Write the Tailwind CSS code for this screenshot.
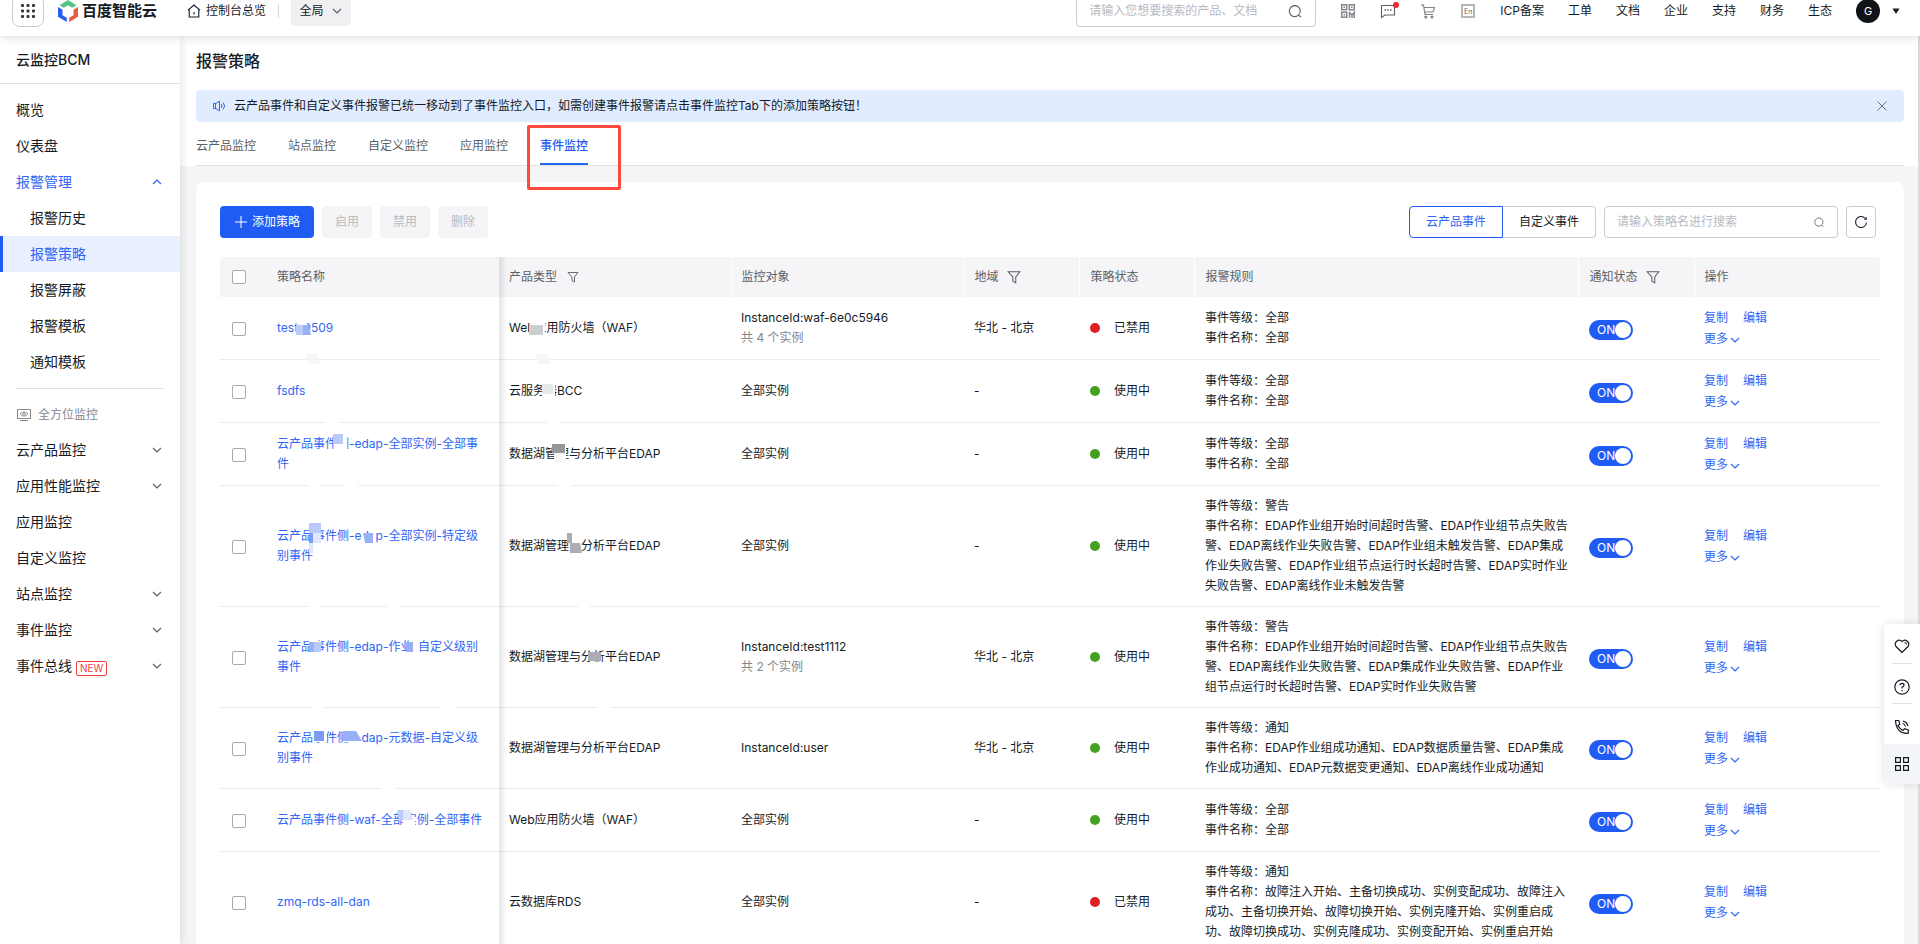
<!DOCTYPE html>
<html lang="zh-CN">

<head>
    <meta charset="UTF-8" />
    <meta name="viewport" content="width=device-width, initial-scale=1.0" />
    <title>云监控BCM - 报警策略</title>
    <script src="https://cdn.jsdelivr.net/npm/@tailwindcss/browser@4"></script>
</head>

<body class="h-screen overflow-hidden flex flex-col bg-white text-xs text-[#151b26] font-['Inter','Noto_Sans_CJK_SC',sans-serif]">
    <!-- icon sprite -->
    <svg class="hidden">
        <symbol id="down" viewBox="0 0 12 12"><path d="M2 4l4 4 4-4" fill="none" stroke="currentColor" stroke-width="1.2" /></symbol>
        <symbol id="up" viewBox="0 0 12 12"><path d="M2 8l4-4 4 4" fill="none" stroke="currentColor" stroke-width="1.2" /></symbol>
        <symbol id="search" viewBox="0 0 16 16"><path d="M11.5 12.2a5.5 5.5 0 1 1 1-1.2M11 11.5l3 2.7" fill="none" stroke="currentColor" stroke-width="1.1" /></symbol>
        <symbol id="filter" viewBox="0 0 12 12"><path d="M1 1.5h10L7.5 6v5L5 9.5V6z" fill="none" stroke="currentColor" stroke-width=".9" /></symbol>
    </svg>

    <header class="relative z-20 h-9 shrink-0 bg-white shadow-[0_2px_8px_rgba(0,0,0,0.12)]">
        <div class="h-[50px] -mt-[14px] pl-3 pr-5 flex items-center">
            <button aria-label="全部产品" class="w-8 h-8 rounded-lg border border-[#c9cacd] flex items-center justify-center text-[#303540]">
                <svg class="size-4" viewBox="0 0 16 16" fill="currentColor">
                    <rect x="1" y="1" width="3" height="3" rx="1" /><rect x="6.5" y="1" width="3" height="3" rx="1" /><rect x="12" y="1" width="3" height="3" rx="1" />
                    <rect x="1" y="6.5" width="3" height="3" rx="1" /><rect x="6.5" y="6.5" width="3" height="3" rx="1" /><rect x="12" y="6.5" width="3" height="3" rx="1" />
                    <rect x="1" y="12" width="3" height="3" rx="1" /><rect x="6.5" y="12" width="3" height="3" rx="1" /><rect x="12" y="12" width="3" height="3" rx="1" />
                </svg>
            </button>
            <a href="#" class="ml-[14px] flex items-center gap-1">
                <svg class="w-5 h-[22px]" viewBox="0 0 20 22">
                    <path d="M1.5 5.2L10 0l8.500 5.200-4.200 2.600L10 5.200 5.700 7.800z" fill="#56c283" />
                    <path d="M0 7l4.500 2.700v5.600l4.300 2.500V22L0 16.800z" fill="#2a5cf0" />
                    <path d="M20 7l-4.500 2.700v5.600l-4.300 2.500V22L20 16.800z" fill="#ea5a3c" />
                </svg>
                <span class="text-[15px] font-bold">百度智能云</span>
            </a>
            <a href="#" class="ml-[30px] flex items-center gap-[5px]">
                <svg class="size-[14px]" viewBox="0 0 14 14" fill="none" stroke="currentColor" stroke-width="1.1">
                    <path d="M1 6.200L7 1l6 5.200M2.200 5.500v7.500h9.600V5.500M7 8v2.500" />
                </svg>
                控制台总览
            </a>
            <span class="ml-3 w-px h-[14px] bg-[#d4d6d9]"></span>
            <button class="ml-3 h-[30px] w-[60px] rounded bg-[#f0f0f2] flex items-center justify-center gap-[7px]">
                全局
                <svg class="size-3 text-[#5c5f66]"><use href="#down" /></svg>
            </button>
            <div class="ml-auto flex items-center gap-6">
                <div class="w-60 h-8 px-3 border border-[#c9cacd] rounded flex items-center">
                    <input aria-label="搜索产品" class="flex-1 min-w-0 outline-none placeholder:text-[#b8babf]" placeholder="请输入您想要搜索的产品、文档" />
                    <svg class="size-4 text-[#5c5f66]"><use href="#search" /></svg>
                </div>
                <a href="#" aria-label="二维码" class="text-[#84868c]">
                    <svg class="size-4" viewBox="0 0 16 16" fill="none" stroke="currentColor" stroke-width="1.5">
                        <path d="M1.700 1.700h5v5h-5zM9.300 1.700h5v5h-5zM1.700 9.300h5v5h-5zM3.500 4.200h1.500M11 4.200h1.500M3.500 11.800h1.500M9.500 8.700v6M9.500 9.500l2.500 2.500 2.200-2.500v5.500M12 12v3" />
                    </svg>
                </a>
                <a href="#" aria-label="消息" class="relative text-[#5c5f66]">
                    <svg class="size-4" viewBox="0 0 16 16" fill="none" stroke="currentColor" stroke-width="1.1">
                        <path d="M1.500 2.500h13v9.500H5l-3.500 2.500z" /><path d="M4.500 7h1.500M7.200 7h1.500M10 7h1.500" stroke-width="1.500" />
                    </svg>
                    <span class="absolute -top-px -right-[3px] size-[6px] rounded-full bg-[#f02a2a]"></span>
                </a>
                <a href="#" aria-label="购物车" class="text-[#84868c]">
                    <svg class="size-4" viewBox="0 0 16 16" fill="none" stroke="currentColor" stroke-width="1.200">
                        <path d="M1 2.200h2.500L5 11.500h8M4 4.500h10.500L13 9H5" /><circle cx="5.800" cy="14" r="1" fill="currentColor" /><circle cx="12" cy="14" r="1" fill="currentColor" />
                    </svg>
                </a>
                <a href="#" aria-label="English" class="size-4 flex items-center justify-center">
                    <span class="size-[14px] border-2 border-[#b4b6ba] flex items-center justify-center text-[7px] leading-none text-[#5c5f66]">En</span>
                </a>
                <a href="#">ICP备案</a>
                <a href="#">工单</a>
                <a href="#">文档</a>
                <a href="#">企业</a>
                <a href="#">支持</a>
                <a href="#">财务</a>
                <a href="#">生态</a>
                <button class="flex items-center gap-3">
                    <span class="size-6 rounded-full bg-[#101318] text-white text-[11px] flex items-center justify-center">G</span>
                    <svg class="size-2" viewBox="0 0 8 8"><path d="M.5 1.500h7L4 7z" fill="currentColor" /></svg>
                </button>
            </div>
        </div>
    </header>

    <div class="flex-1 min-h-0 flex">
        <aside class="relative z-10 w-[180px] shrink-0 bg-white shadow-[2px_0_8px_rgba(0,0,0,0.1)] text-sm">
            <div class="h-12 pl-4 border-b border-[#e0e1e4] flex items-center font-medium">云监控BCM</div>
            <nav id="menu" class="pt-2"></nav>
            <div class="mx-4 mt-2 border-t border-[#dfe0e3]"></div>
            <div class="h-[34px] mt-[9px] pl-4 flex items-center gap-[6px] text-xs text-[#84868c]">
                <svg class="size-4" viewBox="0 0 16 16" fill="none" stroke="currentColor">
                    <path d="M1.500 2.500h13v9h-13zM4 13.500h8" /><path d="M4 7q4-4.500 8 0q-4 4.500-8 0z" stroke-width=".8" /><circle cx="8" cy="7" r="1.200" />
                </svg>
                全方位监控
            </div>
            <nav id="menu2"></nav>
        </aside>

        <main class="flex-1 min-w-0 bg-[#f5f5f7] border-r-2 border-[#d9dadc]">
            <div class="bg-white pl-4 pr-[14px] pt-[13px]">
                <h1 class="text-base leading-6 font-medium">报警策略</h1>
                <div class="mt-[17px] h-8 px-4 rounded bg-[#e1ecff] flex items-center">
                    <svg class="size-[14px] mr-2 text-[#2f66f5]" viewBox="0 0 14 14" fill="none" stroke="currentColor">
                        <path d="M1.500 4.500v5H4L7.500 12V2L4 4.500zM3.500 4.500v5" /><path d="M9.300 5q1.500 2 0 4M11.200 3.500q2.800 3.500 0 7" />
                    </svg>
                    云产品事件和自定义事件报警已统一移动到了事件监控入口，如需创建事件报警请点击事件监控Tab下的添加策略按钮！
                    <button aria-label="关闭" class="ml-auto text-[#6b6e75]">
                        <svg class="size-3" viewBox="0 0 12 12"><path d="M1.500 1.500l9 9M10.500 1.500l-9 9" stroke="currentColor" /></svg>
                    </button>
                </div>
                <div class="h-11 flex gap-8 border-b border-[#dfe0e3] leading-[48px] text-[#5c5f66]">
                    <a href="#">云产品监控</a>
                    <a href="#">站点监控</a>
                    <a href="#">自定义监控</a>
                    <a href="#">应用监控</a>
                    <a href="#" class="relative h-[43px] border-b-2 border-[#2468f2] text-[#245cf0] font-medium">事件监控
                        <span class="absolute -left-[13px] top-[3px] w-[94px] h-[65px] border-[3px] border-[#fd4a3c] rounded-xs"></span>
                    </a>
                </div>
            </div>

            <section class="ml-4 mt-4 mr-[14px] p-6 rounded-lg bg-white">
                <div class="flex items-center gap-2 pr-1">
                    <button class="w-[94px] h-8 rounded bg-[#205cf4] text-white flex items-center justify-center gap-1">
                        <svg class="size-[14px]" viewBox="0 0 14 14"><path d="M7 1v12M1 7h12" stroke="currentColor" /></svg>
                        添加策略
                    </button>
                    <button disabled class="w-[50px] h-8 rounded bg-[#f5f5f7] text-[#b8babf]">启用</button>
                    <button disabled class="w-[50px] h-8 rounded bg-[#f5f5f7] text-[#b8babf]">禁用</button>
                    <button disabled class="w-[50px] h-8 rounded bg-[#f5f5f7] text-[#b8babf]">删除</button>
                    <div class="ml-auto flex">
                        <button class="w-[94px] h-8 rounded-l border border-[#205cf4] text-[#2f66f5]">云产品事件</button>
                        <button class="w-[93px] h-8 rounded-r border border-l-0 border-[#c9cacd]">自定义事件</button>
                    </div>
                    <div class="w-[234px] h-8 px-3 border border-[#c9cacd] rounded flex items-center">
                        <input aria-label="搜索策略" class="flex-1 min-w-0 outline-none placeholder:text-[#b8babf]" placeholder="请输入策略名进行搜索" />
                        <svg class="size-3 text-[#5c5f66]" viewBox="0 0 16 16"><use href="#search" /></svg>
                    </div>
                    <button aria-label="刷新" class="w-[30px] h-8 border border-[#c9cacd] rounded flex items-center justify-center">
                        <svg class="size-[14px]" viewBox="0 0 14 14" fill="none" stroke="currentColor" stroke-width="1.100">
                            <path d="M12.500 7.500A5.500 5.500 0 1 1 11 3.200" /><path d="M12.800 1.800v3h-3z" fill="currentColor" stroke="none" />
                        </svg>
                    </button>
                </div>

                <div class="relative mt-[19px]">
                    <table class="w-full table-fixed leading-5">
                        <colgroup>
                            <col class="w-[46px]" />
                            <col class="w-[233px]" />
                            <col class="w-[232px]" />
                            <col class="w-[232px]" />
                            <col class="w-[116px]" />
                            <col class="w-[115px]" />
                            <col class="w-[384px]" />
                            <col class="w-[116px]" />
                            <col class="w-[186px]" />
                        </colgroup>
                        <thead class="bg-[#f5f5f7] text-[#5c5f66] text-left">
                            <tr class="h-10">
                                <th class="pl-3 rounded-tl"><input type="checkbox" aria-label="全选" class="block appearance-none size-[14px] border border-[#a8aab0] rounded-xs bg-white" /></th>
                                <th class="pl-[11px] font-normal">策略名称</th>
                                <th class="pl-[10px] font-normal border-r border-white"><span class="flex items-center gap-[10px]">产品类型 <svg class="size-3"><use href="#filter" /></svg></span></th>
                                <th class="pl-[10px] font-normal border-r border-white">监控对象</th>
                                <th class="pl-[11px] font-normal border-r border-white"><span class="flex items-center gap-2">地域 <svg class="size-[14px]"><use href="#filter" /></svg></span></th>
                                <th class="pl-[11px] font-normal border-r border-white">策略状态</th>
                                <th class="pl-[11px] font-normal border-r border-white">报警规则</th>
                                <th class="pl-[11px] font-normal border-r border-white"><span class="flex items-center gap-2">通知状态 <svg class="size-[14px]"><use href="#filter" /></svg></span></th>
                                <th class="pl-[10px] font-normal rounded-tr">操作</th>
                            </tr>
                        </thead>
                        <tbody id="rows"></tbody>
                    </table>

                    <!-- shadow of the pinned name column -->
                    <div class="absolute inset-y-0 left-[279px] w-2 bg-linear-to-r from-black/10 to-transparent"></div>

                    <!-- mosaic over the test names -->
                    <svg class="absolute top-0 left-0 w-[480px] h-[600px] pointer-events-none">
                        <g fill="#fff">
                            <path d="M78 58h9v10h-9zM311 58h12v10h-12zM323 58h2v22h-2zM106 163h13v5h-13zM327 163h13v5h-13zM322 124h13v16h-13z" />
                            <path d="M114 177h13v20h-13zM89 226h12v5H89zM125 226h13v5h-13zM336 186h10v20h-10zM338 226h13v5h-13z" />
                            <path d="M93 286h6v14h-6zM142 276h14v12h-14zM352 276h9v20h-9zM89 347h12v5H89zM167 347h13v5h-13zM358 347h12v5h-12z" />
                            <path d="M89 384h12v12H89zM193 383h5v15h-5zM92 448h12v5H92zM221 448h14v5h-14zM378 448h12v5h-12z" />
                            <path d="M94 473h13v12H94zM123 473h19v12h-19zM162 529h14v5h-14zM183 563h12v12h-12z" />
                        </g>
                        <g fill="#f6f6f6">
                            <path d="M85 97h12l3 10H88zM316 97h11l3 10h-12zM334 196h8v10h-8z" />
                        </g>
                        <path d="M76 68h7v10h-7zM89 266h12v10H89zM93 385h8v10h-8zM113 177h10v10h-10zM177 553h6v10h-4z" fill="#b9cbfb" />
                        <path d="M83 68h6l2 10h-8zM143 276h10v10h-8zM89 385h5v10h-5zM184 385h9v10h-7zM123 474h13l6 10h-19z" fill="#97b0f8" />
                        <path d="M89 276h4v10h-4zM94 474h10v10H94z" fill="#7b9bf7" />
                        <path d="M93 276h8v10h-8zM89 286h4v10h-4zM183 553h7l3 10h-10z" fill="#dfe7fd" />
                        <path d="M309 68h14v10h-14z" fill="#cdced0" />
                        <path d="M322 127h11v10h-11z" fill="#e8e9ea" />
                        <path d="M332 187h13v9h-13z" fill="#96979b" />
                        <path d="M347 276h5v10h-5zM350 286h10l2 10h-12zM368 395h13v9h-13z" fill="#acacb1" />
                    </svg>
                </div>
            </section>
        </main>
    </div>

    <!-- floating tools -->
    <div class="fixed z-30 right-0 top-[624px] w-9 rounded-l bg-white shadow-[0_0_8px_rgba(0,0,0,0.12)] flex flex-col items-center overflow-hidden">
        <button aria-label="收藏" class="w-5 h-10 flex items-center justify-center border-b border-[#dfe0e3] pt-1">
            <svg class="size-4 shrink-0" viewBox="0 0 16 16" fill="none" stroke="currentColor" stroke-width="1.200"><path d="M8 14.500L2 8.500C-.5 4.500 4.500 0 8 3.500 11.500 0 16.500 4.500 14 8.500zM10.500 4.500q1.800 0 2 2" /></svg>
        </button>
        <button aria-label="帮助" class="w-5 h-10 flex items-center justify-center border-b border-[#dfe0e3] pt-[6px]">
            <svg class="size-4 shrink-0" viewBox="0 0 16 16" fill="none" stroke="currentColor" stroke-width="1.200"><circle cx="8" cy="8" r="7.200" /><path d="M6 6.300Q6 4.400 8 4.400t2 1.800Q10 7.300 8 8.200v1.300M8 11v1.200" /></svg>
        </button>
        <button aria-label="电话" class="w-5 h-10 flex items-center justify-center pt-[6px]">
            <svg class="size-4 shrink-0" viewBox="0 0 16 16" fill="none" stroke="currentColor" stroke-width="1.200"><path d="M1.500 1.500h3.300l1 3.800-1.800 1.200q1.500 3.500 5 5l1.500-1.800 3.800 1.200v3.300Q2.500 15.500 1.500 1.500zM8.500 4.500q2.500.5 3 3M9 2.200q4 .8 4.800 4.800" /></svg>
        </button>
        <button aria-label="更多工具" class="w-full h-10 flex items-center justify-center bg-[#f4f5f8]">
            <svg class="size-4" viewBox="0 0 16 16" fill="none" stroke="currentColor" stroke-width="1.200"><path d="M1.600 1.600h4.800v4.800H1.600zM9.600 1.600h4.800v4.800H9.600zM1.600 9.600h4.800v4.800H1.600zM9.600 9.600h4.800v4.800H9.600z" /></svg>
        </button>
    </div>

    <script>
        const menu = [
            { name: "概览" },
            { name: "仪表盘" },
            { name: "报警管理", open: true },
            { name: "报警历史", sub: true },
            { name: "报警策略", sub: true, active: true },
            { name: "报警屏蔽", sub: true },
            { name: "报警模板", sub: true },
            { name: "通知模板", sub: true },
        ];
        const menu2 = [
            { name: "云产品监控", more: true },
            { name: "应用性能监控", more: true },
            { name: "应用监控" },
            { name: "自定义监控" },
            { name: "站点监控", more: true },
            { name: "事件监控", more: true },
            { name: "事件总线", more: true, isNew: true },
        ];

        const menuItem = (item) => {
            let style = "pl-4";
            if (item.sub) style = "pl-[30px]";
            if (item.open) style = "pl-4 text-[#2f66f5]";
            if (item.active) style = "pl-[27px] border-l-[3px] border-[#205cf4] bg-[#e8f0ff] text-[#2f66f5]";
            return `
            <a href="#" class="h-9 pr-[17px] flex items-center ${style}">${item.name}
                ${item.isNew ? `<span class="ml-1 mt-1 px-[3px] border border-[#f33e3e] rounded-xs text-[10px] leading-[13px] text-[#f33e3e]">NEW</span>` : ""}
                ${item.more ? `<svg class="ml-auto size-3 text-[#5c5f66]"><use href="#down" /></svg>` : ""}
                ${item.open ? `<svg class="ml-auto size-3"><use href="#up" /></svg>` : ""}
            </a>`;
        };
        document.querySelector("#menu").innerHTML = menu.map(menuItem).join("");
        document.querySelector("#menu2").innerHTML = menu2.map(menuItem).join("");

        const policies = [
            { name: "test-0509", product: "Web应用防火墙（WAF）", target: "InstanceId:waf-6e0c5946", count: 4, region: "华北 - 北京", on: false, level: "全部", events: "全部" },
            { name: "fsdfs", product: "云服务器BCC", target: "全部实例", region: "-", on: true, level: "全部", events: "全部" },
            { name: "云产品事件侧-edap-全部实例-全部事件", product: "数据湖管理与分析平台EDAP", target: "全部实例", region: "-", on: true, level: "全部", events: "全部" },
            { name: "云产品事件侧-edap-全部实例-特定级别事件", product: "数据湖管理与分析平台EDAP", target: "全部实例", region: "-", on: true, level: "警告", events: "EDAP作业组开始时间超时告警、EDAP作业组节点失败告警、EDAP离线作业失败告警、EDAP作业组未触发告警、EDAP集成作业失败告警、EDAP作业组节点运行时长超时告警、EDAP实时作业失败告警、EDAP离线作业未触发告警" },
            { name: "云产品事件侧-edap-作业-自定义级别事件", product: "数据湖管理与分析平台EDAP", target: "InstanceId:test1112", count: 2, region: "华北 - 北京", on: true, level: "警告", events: "EDAP作业组开始时间超时告警、EDAP作业组节点失败告警、EDAP离线作业失败告警、EDAP集成作业失败告警、EDAP作业组节点运行时长超时告警、EDAP实时作业失败告警" },
            { name: "云产品事件侧-edap-元数据-自定义级别事件", product: "数据湖管理与分析平台EDAP", target: "InstanceId:user", region: "华北 - 北京", on: true, level: "通知", events: "EDAP作业组成功通知、EDAP数据质量告警、EDAP集成作业成功通知、EDAP元数据变更通知、EDAP离线作业成功通知" },
            { name: "云产品事件侧-waf-全部实例-全部事件", product: "Web应用防火墙（WAF）", target: "全部实例", region: "-", on: true, level: "全部", events: "全部" },
            { name: "zmq-rds-all-dan", product: "云数据库RDS", target: "全部实例", region: "-", on: false, level: "通知", events: "故障注入开始、主备切换成功、实例变配成功、故障注入成功、主备切换开始、故障切换开始、实例克隆开始、实例重启成功、故障切换成功、实例克隆成功、实例变配开始、实例重启开始" },
        ];

        document.querySelector("#rows").innerHTML = policies.map((p) => `
            <tr class="border-b border-[#ebecee]">
                <td class="pl-3 pt-[2px]"><input type="checkbox" aria-label="选择 ${p.name}" class="block appearance-none size-[14px] border border-[#a8aab0] rounded-xs bg-white" /></td>
                <td class="pl-[11px] pr-[14px]"><a href="#" class="text-[#2f66f5]">${p.name}</a></td>
                <td class="pl-[10px]">${p.product}</td>
                <td class="pl-[10px]">${p.target}${p.count ? `<div class="text-[#84868c]">共 ${p.count} 个实例</div>` : ""}</td>
                <td class="pl-[11px]">${p.region}</td>
                <td class="pl-[11px]"><span class="flex items-center gap-[14px]"><i class="size-[10px] rounded-full ${p.on ? "bg-[#44a021]" : "bg-[#e02020]"}"></i>${p.on ? "使用中" : "已禁用"}</span></td>
                <td class="pl-[11px] pr-[10px] py-[10px]">事件等级：${p.level}<br />事件名称：${p.events}</td>
                <td class="pl-[11px] pt-1">
                    <label class="w-11 h-5 pl-2 pr-[2px] rounded-full bg-[#205cf4] text-white flex items-center justify-between">
                        <input type="checkbox" checked class="sr-only" />ON<span class="-ml-1 size-4 shrink-0 rounded-full bg-white"></span>
                    </label>
                </td>
                <td class="pl-[10px] py-[10px] leading-[21px] text-[#2f66f5]">
                    <div class="flex gap-[15px]"><a href="#">复制</a><a href="#">编辑</a></div>
                    <a href="#" class="flex items-center">更多<svg class="ml-px size-3 mt-[2px]"><use href="#down" /></svg></a>
                </td>
            </tr>`).join("");
    </script>
</body>

</html>
